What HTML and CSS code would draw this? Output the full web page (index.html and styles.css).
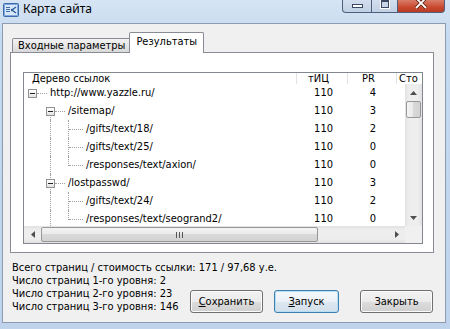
FILE: index.html
```html
<!DOCTYPE html>
<html lang="ru">
<head>
    <meta charset="UTF-8">
    <meta name="viewport" content="width=device-width, initial-scale=1.0">
    <title>Карта сайта</title>
    <link rel="stylesheet" href="styles.css">
</head>
<body>
<div class="window">

    <div class="titlebar">
        <svg class="app-icon" width="16" height="14" viewBox="0 0 16 14">
            <rect x="0.5" y="0.5" width="15" height="13" rx="1" fill="#7fa8dc" stroke="#3e6cab"/>
            <rect x="2" y="2" width="12" height="10" fill="#d9e8f8"/>
            <rect x="3" y="4" width="4" height="1" fill="#3e6cab"/>
            <rect x="3" y="6" width="4" height="1" fill="#3e6cab"/>
            <rect x="3" y="8" width="4" height="1" fill="#3e6cab"/>
            <path d="M13 4 L9 7 L13 10" fill="none" stroke="#2f5e9e" stroke-width="1.4"/>
            <circle cx="9" cy="7" r="1.2" fill="#2f5e9e"/>
        </svg>
        <span class="title">Карта сайта</span>
        <div class="caption-buttons">
            <div class="cap-btn cap-min"><span class="glyph-min"></span></div>
            <div class="cap-btn cap-max"><span class="glyph-max"></span></div>
            <div class="cap-btn cap-close">
                <svg width="14" height="10" viewBox="0 0 14 10">
                    <path d="M2 -2 L12 8 M12 -2 L2 8" stroke="#5a1e14" stroke-width="3.4"/>
                    <path d="M2 -2 L12 8 M12 -2 L2 8" stroke="#ffffff" stroke-width="1.8"/>
                </svg>
            </div>
        </div>
    </div>

    <div class="client">
        <div class="tabs">
            <div class="tab">Входные параметры</div>
            <div class="tab active">Результаты</div>
        </div>

        <div class="tab-page">
            <div class="tree-list">
                <div class="header">
                    <div class="hcell h-tree">Дерево ссылок</div>
                    <div class="hcell h-tic">тИЦ</div>
                    <div class="hcell h-pr">PR</div>
                    <div class="hcell h-cost">Сто</div>
                </div>

                <div class="rows">
                    <div class="row">
                        <div class="tree-cell"><span class="g node"><span class="box"></span></span><span class="label">http://www.yazzle.ru/</span></div>
                        <div class="num">110</div>
                        <div class="pr">4</div>
                    </div>
                    <div class="row">
                        <div class="tree-cell"><span class="g"></span><span class="g node down"><span class="box"></span></span><span class="label">/sitemap/</span></div>
                        <div class="num">110</div>
                        <div class="pr">3</div>
                    </div>
                    <div class="row">
                        <div class="tree-cell"><span class="g"></span><span class="g pipe"></span><span class="g tee"></span><span class="label">/gifts/text/18/</span></div>
                        <div class="num">110</div>
                        <div class="pr">2</div>
                    </div>
                    <div class="row">
                        <div class="tree-cell"><span class="g"></span><span class="g pipe"></span><span class="g tee"></span><span class="label">/gifts/text/25/</span></div>
                        <div class="num">110</div>
                        <div class="pr">0</div>
                    </div>
                    <div class="row">
                        <div class="tree-cell"><span class="g"></span><span class="g pipe"></span><span class="g ell"></span><span class="label">/responses/text/axion/</span></div>
                        <div class="num">110</div>
                        <div class="pr">0</div>
                    </div>
                    <div class="row">
                        <div class="tree-cell"><span class="g"></span><span class="g node full"><span class="box"></span></span><span class="label">/lostpasswd/</span></div>
                        <div class="num">110</div>
                        <div class="pr">3</div>
                    </div>
                    <div class="row">
                        <div class="tree-cell"><span class="g"></span><span class="g pipe"></span><span class="g tee"></span><span class="label">/gifts/text/24/</span></div>
                        <div class="num">110</div>
                        <div class="pr">2</div>
                    </div>
                    <div class="row">
                        <div class="tree-cell"><span class="g"></span><span class="g pipe"></span><span class="g ell"></span><span class="label">/responses/text/seogrand2/</span></div>
                        <div class="num">110</div>
                        <div class="pr">0</div>
                    </div>
                </div>

                <div class="vscroll">
                    <div class="arrow">
                        <svg width="7" height="4" viewBox="0 0 7 4"><path d="M0 4 L3.5 0 L7 4 Z" fill="#4f4f4f"/></svg>
                    </div>
                    <div class="track-v"><div class="thumb-v"></div></div>
                    <div class="arrow">
                        <svg width="7" height="4" viewBox="0 0 7 4"><path d="M0 0 L3.5 4 L7 0 Z" fill="#4f4f4f"/></svg>
                    </div>
                </div>

                <div class="hscroll">
                    <div class="arrow">
                        <svg width="4" height="7" viewBox="0 0 4 7"><path d="M4 0 L0 3.5 L4 7 Z" fill="#4f4f4f"/></svg>
                    </div>
                    <div class="track-h">
                        <div class="thumb-h">
                            <svg width="7" height="6" viewBox="0 0 7 6">
                                <rect x="0" y="0" width="1" height="6" fill="#555"/>
                                <rect x="3" y="0" width="1" height="6" fill="#555"/>
                                <rect x="6" y="0" width="1" height="6" fill="#555"/>
                            </svg>
                        </div>
                    </div>
                    <div class="arrow">
                        <svg width="4" height="7" viewBox="0 0 4 7"><path d="M0 0 L4 3.5 L0 7 Z" fill="#4f4f4f"/></svg>
                    </div>
                </div>
                <div class="corner"></div>
            </div>
        </div>

        <div class="footer">
            <div>Всего страниц / стоимость ссылки: 171 / 97,68 у.е.</div>
            <div class="footer-row">
                <div class="stats">
                    <div>Число страниц 1-го уровня: 2</div>
                    <div>Число страниц 2-го уровня: 23</div>
                    <div>Число страниц 3-го уровня: 146</div>
                </div>
                <div class="buttons">
                    <button class="btn btn-save"><u>С</u>охранить</button>
                    <button class="btn btn-run"><u>З</u>апуск</button>
                    <button class="btn btn-close">Закрыть</button>
                </div>
            </div>
        </div>
    </div>

</div>
</body>
</html>
```

FILE: styles.css
```css
body {
    margin: 0;
    width: 450px;
    height: 329px;
    overflow: hidden;
    font-family: "DejaVu Sans Condensed", "DejaVu Sans", sans-serif;
    font-size: 11px;
    color: #000;
}
.window {
    height: 329px;
    background: linear-gradient(to bottom, #d6e4f4 0, #c5d9ef 40px, #bfd4ec 100%);
}

/* title bar */
.titlebar {
    height: 23px;
    display: flex;
    align-items: flex-start;
}
.app-icon {
    margin: 3px 0 0 3px;
}
.title {
    font-family: "Noto Sans", sans-serif;
    font-size: 12px;
    line-height: 18px;
    margin-left: 4px;
}
.caption-buttons {
    margin-left: auto;
    margin-right: 5px;
    display: flex;
}
.cap-btn {
    height: 12px;
    border: 1px solid #4e5f79;
    border-top: none;
    display: flex;
    justify-content: center;
    align-items: flex-start;
    overflow: hidden;
}
.cap-min {
    width: 28px;
    border-radius: 0 0 0 4px;
    background: linear-gradient(to bottom, #d3dfee, #c1d0e4);
}
.cap-max {
    width: 25px;
    border-left: none;
    background: linear-gradient(to bottom, #d3dfee, #c1d0e4);
}
.cap-close {
    width: 46px;
    border-left: none;
    border-radius: 0 0 4px 0;
    background: linear-gradient(to bottom, #d97d6a, #c9492f 60%, #b93a22);
}
.glyph-min {
    margin-top: 4px;
    width: 9px;
    height: 2px;
    background: #fff;
    border: 1px solid #3b4a62;
}
.glyph-max {
    margin-top: 0;
    width: 6px;
    height: 5px;
    background: #c9d6e8;
    border: 1px solid #3b4a62;
    border-top-width: 2px;
    box-shadow: 0 0 0 1px #fff;
}

/* client area */
.client {
    margin: 0 4px 0 2px;
    height: 300px;
    box-sizing: border-box;
    border: 1px solid #8b9bb1;
    background: #f0f0f0;
}
.tabs {
    display: flex;
    align-items: flex-end;
    height: 20px;
    margin: 8px 0 0 9px;
}
.tab {
    height: 14px;
    box-sizing: border-box;
    padding: 0 5px;
    line-height: 13px;
    border: 1px solid #898c95;
    border-bottom: none;
    border-radius: 2px 2px 0 0;
    background: linear-gradient(to bottom, #f2f2f2, #e6e6e6 50%, #d9d9d9);
    white-space: nowrap;
}
.tab.active {
    height: 21px;
    margin-bottom: -1px;
    margin-left: -2px;
    padding: 0 6px;
    line-height: 17px;
    background: #fff;
    position: relative;
    z-index: 1;
}
.tab-page {
    margin: 0 11px 0 7px;
    height: 201px;
    box-sizing: border-box;
    border: 1px solid #898c95;
    background: #fff;
    padding: 19px 10px 8px 12px;
}

/* tree list */
.tree-list {
    height: 172px;
    box-sizing: border-box;
    border: 1px solid #828790;
    background: #fff;
    display: grid;
    grid-template-columns: 1fr 17px;
    grid-template-rows: 11px 1fr 17px;
    overflow: hidden;
}
.header {
    grid-column: 1 / 3;
    display: grid;
    grid-template-columns: 273px 51px 49px 1fr;
    line-height: 11px;
    overflow: hidden;
}
.hcell {
    border-right: 1px solid #e3e3e3;
    white-space: nowrap;
    overflow: hidden;
}
.h-tree { padding-left: 8px; }
.h-tic { padding-left: 11px; }
.h-pr { padding-left: 14px; }
.h-cost { padding-left: 2px; border-right: none; }

.rows {
    overflow: hidden;
}
.row {
    display: grid;
    grid-template-columns: 273px 51px 49px;
    height: 18px;
    line-height: 18px;
}
.tree-cell {
    display: flex;
    white-space: nowrap;
}
.label {
    padding-left: 8px;
}
.num {
    text-align: right;
    padding-right: 15px;
}
.pr {
    text-align: right;
    padding-right: 21px;
}

/* tree lines */
.g {
    width: 18px;
    flex-shrink: 0;
    position: relative;
}
.g.pipe::before,
.g.tee::before,
.g.ell::before,
.g.node.down::before,
.g.node.full::before {
    content: "";
    position: absolute;
    left: 8px;
    top: 0;
    bottom: 0;
    border-left: 1px dotted #a0a0a0;
}
.g.ell::before {
    bottom: auto;
    height: 10px;
}
.g.node.down::before {
    top: 9px;
}
.g.tee::after,
.g.ell::after,
.g.node::after {
    content: "";
    position: absolute;
    top: 9px;
    left: 9px;
    right: -5px;
    border-top: 1px dotted #a0a0a0;
}
.g.node::after {
    left: 13px;
}
.box {
    display: flex;
    justify-content: center;
    align-items: center;
    margin: 5px 0 0 4px;
    width: 9px;
    height: 9px;
    box-sizing: border-box;
    border: 1px solid #919191;
    background: linear-gradient(to bottom, #fff, #e2e2e2);
    position: relative;
    z-index: 1;
}
.box::before {
    content: "";
    width: 5px;
    height: 1px;
    background: #222;
}

/* scroll bars */
.vscroll {
    display: flex;
    flex-direction: column;
    background: linear-gradient(to right, #e2e2e2, #eeeeee 25%, #eeeeee 75%, #e2e2e2);
}
.hscroll {
    display: flex;
    background: linear-gradient(to bottom, #e2e2e2, #eeeeee 25%, #eeeeee 75%, #e2e2e2);
}
.arrow {
    width: 17px;
    height: 17px;
    flex-shrink: 0;
    display: flex;
    justify-content: center;
    align-items: center;
}
.track-v {
    flex: 1;
}
.thumb-v {
    margin: 0 1px;
    height: 17px;
    box-sizing: border-box;
    border: 1px solid #979797;
    border-radius: 2px;
    background: linear-gradient(to right, #f4f4f4, #e9e9e9 50%, #d9d9d9 50%, #d2d2d2);
}
.track-h {
    flex: 1;
}
.thumb-h {
    width: 277px;
    height: 15px;
    margin-top: 1px;
    box-sizing: border-box;
    border: 1px solid #979797;
    border-radius: 2px;
    background: linear-gradient(to bottom, #f4f4f4, #e9e9e9 50%, #d9d9d9 50%, #d2d2d2);
    display: flex;
    justify-content: center;
    align-items: center;
}
.corner {
    background: #f0f0f0;
}

/* footer */
.footer {
    margin: 8px 0 0 9px;
    line-height: 13px;
    white-space: nowrap;
}
.footer-row {
    display: flex;
}
.buttons {
    margin: 16px 12px 0 auto;
    display: flex;
}
.btn {
    height: 23px;
    box-sizing: border-box;
    padding: 0;
    font: inherit;
    color: #000;
    border: 1px solid #707070;
    border-radius: 3px;
    background: linear-gradient(to bottom, #f2f2f2, #ebebeb 50%, #dddddd 50%, #cfcfcf);
    box-shadow: inset 0 0 0 1px #fbfbfb;
}
.btn-save {
    width: 73px;
}
.btn-run {
    width: 65px;
    margin-left: 11px;
    border-color: #3c7fb1;
    background: linear-gradient(to bottom, #f4f8fb, #ebf2f7 50%, #dde8f0 50%, #d2e0ea);
    box-shadow: inset 0 0 0 1px #b8def5;
}
.btn-close {
    width: 73px;
    margin-left: 21px;
}
```
